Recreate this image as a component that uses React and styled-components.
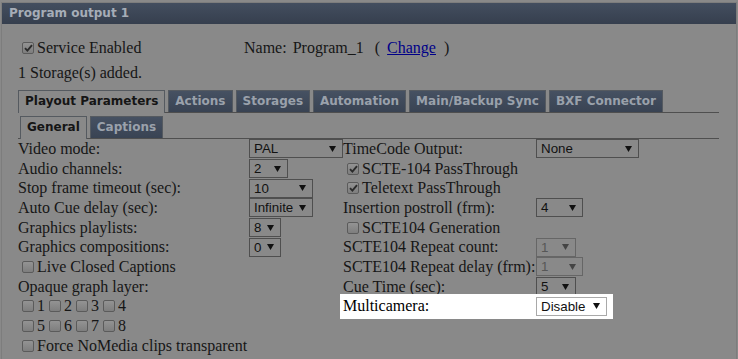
import React from 'react'
import styled, { createGlobalStyle } from 'styled-components'

const GlobalStyle = createGlobalStyle`
  html, body {
    margin: 0;
    padding: 0;
    background: #898989;
  }
  body {
    font-family: "Liberation Serif", "Times New Roman", serif;
    font-size: 16px;
    color: #161616;
  }
`

const Page = styled.div`
  width: 738px;
  height: 359px;
  overflow: hidden;
  padding-top: 2px;
  box-sizing: border-box;
`

const Panel = styled.div`
  margin: 0 1px;
  border: 1px solid #7d7d7d;
  border-bottom: none;
  height: 357px;
  box-sizing: border-box;
`

const TitleBar = styled.div`
  height: 21px;
  line-height: 21px;
  padding-left: 7px;
  background: linear-gradient(#434e5f, #363f4e);
  color: #a6adb7;
  font-family: "DejaVu Sans", Verdana, sans-serif;
  font-weight: bold;
  font-size: 12px;
`

const Body = styled.div`
  padding: 14px 17px 0 16px;
`

const TopRow = styled.div`
  display: grid;
  grid-template-columns: 226px auto;
  height: 19px;
  align-items: center;
`

const Inline = styled.span`
  display: inline-flex;
  align-items: center;
  white-space: nowrap;
`

const Gap = styled.span`
  display: inline-block;
  width: ${p => p.$w}px;
`

const Link = styled.a`
  color: #000088;
  text-decoration: underline;
  cursor: pointer;
`

const Note = styled.div`
  margin-top: 6px;
  line-height: 19px;
`

const TabBar = styled.div`
  display: flex;
  align-items: flex-end;
  gap: 3px;
  margin-top: ${p => p.$top}px;
  padding-left: ${p => p.$indent}px;
  border-bottom: 1px solid #4f4f4f;
`

const Tab = styled.div`
  padding: 3px 6px;
  line-height: 15px;
  font-family: "DejaVu Sans", Verdana, sans-serif;
  font-weight: bold;
  font-size: 12px;
  border: 1px solid #555a60;
  border-bottom: none;
  white-space: nowrap;
  color: ${p => (p.$active ? '#151515' : '#9aa1ab')};
  background: ${p => (p.$active ? '#898989' : 'linear-gradient(#465162, #394353)')};
  margin-bottom: ${p => (p.$active ? '-1px' : '0')};
  padding-bottom: ${p => (p.$active ? '4px' : '3px')};
`

const Form = styled.div`
  display: grid;
  grid-template-columns: 325px 1fr;
`

const Column = styled.div`
  display: grid;
  grid-auto-rows: 19.7px;
  justify-items: start;
`

const Row = styled.div`
  display: grid;
  grid-template-columns: ${p => p.$label}px max-content;
  align-items: center;
  height: 19.7px;
  white-space: nowrap;
  ${p =>
    p.$highlight &&
    `
    position: relative;
    background: #fff;
    color: #000;
    padding-right: 3px;
    box-shadow: 0 0 0 3px #fff;
  `}
`

const CheckRow = styled.div`
  display: flex;
  align-items: center;
  height: 19.7px;
  white-space: nowrap;
`

const Box = styled.span`
  display: inline-flex;
  align-items: center;
  justify-content: center;
  width: 12px;
  height: 12px;
  box-sizing: border-box;
  margin: 0 3px 0 4px;
  border: 1px solid #5b5b5b;
  border-radius: 2px;
  background: linear-gradient(#939393, #7e7e7e);
  flex: none;
`

const SelectBox = styled.div`
  display: flex;
  align-items: center;
  justify-content: space-between;
  box-sizing: border-box;
  width: ${p => p.$w}px;
  height: 19px;
  padding: 0 6px 0 4px;
  border: 1px solid ${p => (p.$light ? '#a9a9a9' : p.$disabled ? '#666' : '#4f4f4f')};
  background: ${p => (p.$light ? '#fff' : 'transparent')};
  color: ${p => (p.$disabled ? '#575757' : '#111')};
  font-family: "Liberation Sans", Arial, sans-serif;
  font-size: 13.33px;
`

function Check({ checked }) {
  return (
    <Box>
      {checked && (
        <svg width="9" height="8" viewBox="0 0 9 8">
          <path d="M1 4.2 L3.4 6.6 L8 1.2" fill="none" stroke="#2b2b2b" strokeWidth="1.9" />
        </svg>
      )}
    </Box>
  )
}

function Select({ value, w, disabled, light }) {
  return (
    <SelectBox $w={w} $disabled={disabled} $light={light}>
      <span>{value}</span>
      <svg width="7" height="6" viewBox="0 0 7 6">
        <polygon points="0,0 7,0 3.5,6" fill={disabled ? '#444' : '#111'} />
      </svg>
    </SelectBox>
  )
}

const leftRows = [
  { label: 'Video mode:', value: 'PAL', w: 94 },
  { label: 'Audio channels:', value: '2', w: 39 },
  { label: 'Stop frame timeout (sec):', value: '10', w: 64 },
  { label: 'Auto Cue delay (sec):', value: 'Infinite', w: 64 },
  { label: 'Graphics playlists:', value: '8', w: 32 },
  { label: 'Graphics compositions:', value: '0', w: 32 },
]

const rightRows = [
  { label: 'TimeCode Output:', value: 'None', w: 103 },
  { check: 'SCTE-104 PassThrough', checked: true },
  { check: 'Teletext PassThrough', checked: true },
  { label: 'Insertion postroll (frm):', value: '4', w: 47 },
  { check: 'SCTE104 Generation' },
  { label: 'SCTE104 Repeat count:', value: '1', w: 40, disabled: true },
  { label: 'SCTE104 Repeat delay (frm):', value: '1', w: 47, disabled: true },
  { label: 'Cue Time (sec):', value: '5', w: 40 },
  { label: 'Multicamera:', value: 'Disable', w: 71, highlight: true },
]

const mainTabs = ['Playout Parameters', 'Actions', 'Storages', 'Automation', 'Main/Backup Sync', 'BXF Connector']

export default function App() {
  return (
    <>
      <GlobalStyle />
      <Page>
        <Panel>
          <TitleBar>Program output 1</TitleBar>
          <Body>
            <TopRow>
              <Inline>
                <Check checked />
                Service Enabled
              </Inline>
              <Inline>
                Name:<Gap $w={6} />Program_1<Gap $w={11} />(<Gap $w={7} />
                <Link>Change</Link>
                <Gap $w={8} />)
              </Inline>
            </TopRow>
            <Note>1 Storage(s) added.</Note>

            <TabBar $top={8} $indent={0}>
              {mainTabs.map((t, i) => (
                <Tab key={t} $active={i === 0}>{t}</Tab>
              ))}
            </TabBar>
            <TabBar $top={3} $indent={2}>
              <Tab $active>General</Tab>
              <Tab>Captions</Tab>
            </TabBar>

            <Form>
              <Column>
                {leftRows.map(r => (
                  <Row key={r.label} $label={231}>
                    <span>{r.label}</span>
                    <Select value={r.value} w={r.w} />
                  </Row>
                ))}
                <CheckRow>
                  <Check />
                  Live Closed Captions
                </CheckRow>
                <CheckRow>Opaque graph layer:</CheckRow>
                <CheckRow>
                  {[1, 2, 3, 4].map(n => (
                    <Inline key={n}><Check />{n}</Inline>
                  ))}
                </CheckRow>
                <CheckRow>
                  {[5, 6, 7, 8].map(n => (
                    <Inline key={n}><Check />{n}</Inline>
                  ))}
                </CheckRow>
                <CheckRow>
                  <Check />
                  Force NoMedia clips transparent
                </CheckRow>
              </Column>

              <Column>
                {rightRows.map(r =>
                  r.check ? (
                    <CheckRow key={r.check}>
                      <Check checked={r.checked} />
                      {r.check}
                    </CheckRow>
                  ) : (
                    <Row key={r.label} $label={193} $highlight={r.highlight}>
                      <span>{r.label}</span>
                      <Select value={r.value} w={r.w} disabled={r.disabled} light={r.highlight} />
                    </Row>
                  )
                )}
              </Column>
            </Form>
          </Body>
        </Panel>
      </Page>
    </>
  )
}
